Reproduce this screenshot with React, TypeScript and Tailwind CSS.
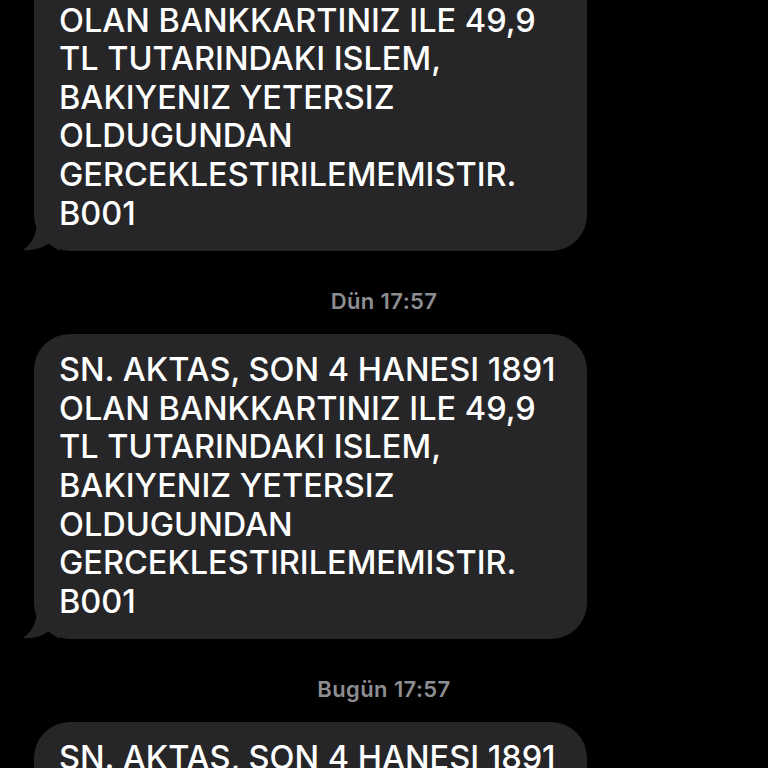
import React from 'react';

const lines = [
  'SN. AKTAS, SON 4 HANESI 1891',
  'OLAN BANKKARTINIZ ILE 49,9',
  'TL TUTARINDAKI ISLEM,',
  'BAKIYENIZ YETERSIZ',
  'OLDUGUNDAN',
  'GERCEKLESTIRILEMEMISTIR.',
  'B001',
];

const Tail: React.FC = () => (
  <svg
    className="absolute -left-[11px] bottom-0"
    width="36"
    height="30"
    viewBox="0 0 36 30"
  >
    <path d="M14 0 C14 12 10 22 0 29 C10 30 20 27 26 22 C30 26 34 28 36 30 L36 0 Z" fill="#262628" />
  </svg>
);

const Bubble: React.FC = () => (
  <div className="relative ml-[34px] w-[553px]">
    <div className="relative z-10 rounded-[36px] bg-[#262628] pl-[25px] pr-4 pt-[17px] pb-[18px]">
      {lines.map((line) => (
        <div key={line} className="text-[32.5px] leading-[38.6px] font-medium text-white whitespace-nowrap">
          {line}
        </div>
      ))}
    </div>
    <Tail />
  </div>
);

const Stamp: React.FC<{ day: string }> = ({ day }) => (
  <div className="flex justify-center pt-[38px] pb-[20px] text-[22px] leading-[25px] font-semibold tracking-[0.4px] text-[#8d8d92]">
    <span>{day} 17:57</span>
  </div>
);

export default function App() {
  return (
    <div
      className="w-[768px] h-[768px] overflow-hidden bg-black"
      style={{ fontFamily: 'Inter, "Noto Sans", sans-serif' }}
    >
      <div className="-mt-[54px]">
        <Bubble />
        <Stamp day="Dün" />
        <Bubble />
        <Stamp day="Bugün" />
        <Bubble />
      </div>
    </div>
  );
}
